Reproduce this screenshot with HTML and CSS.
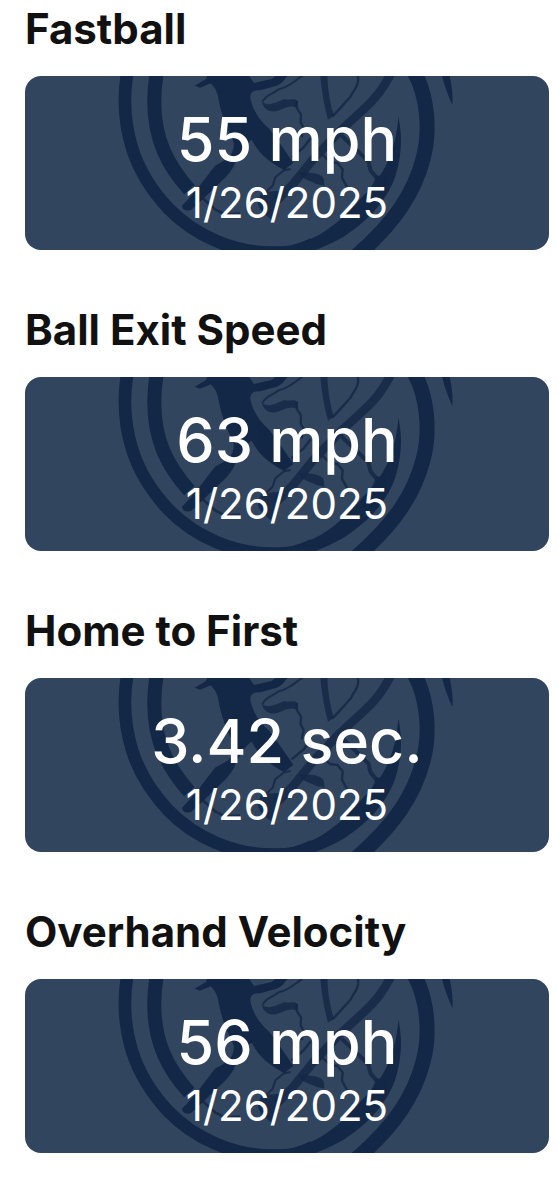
FILE: index.html
```html
<!DOCTYPE html>
<html lang="en">
<head>
<meta charset="utf-8">
<meta name="viewport" content="width=device-width, initial-scale=1">
<title>Player Stats</title>
<link rel="stylesheet" href="styles.css">
</head>
<body>
<svg class="defs" aria-hidden="true">
  <symbol id="emblem" viewBox="-225 21 1572 522" preserveAspectRatio="xMidYMid slice">
    <g fill="none" stroke="currentColor" stroke-linejoin="round">
      <path stroke-width="38" d="M84 0C66 90 74 165 97 240C118 305 160 370 205 418C285 500 400 551 520 551C570 551 600 545 640 525"/>
      <path stroke-width="42" d="M172 0C154 100 164 180 190 243C208 285 232 322 268 362"/>
      <path stroke-width="45" d="M938 0C985 80 991 190 969 270C943 370 885 460 770 560"/>
    </g>
    <g fill="none" stroke="currentColor" stroke-linejoin="round" opacity="0.8">
      <path stroke-width="26" d="M880 0C850 60 825 90 790 122L722 184L640 270L575 350L530 395"/>
      <path stroke-width="6" d="M608 20C585 34 570 53 536 61C520 75 498 77 488 98"/>
      <path stroke-width="7" d="M590 96L591 118L603 136L602 160L611 177L605 205M632 208L610 236L575 265"/>
      <path stroke-width="7" d="M772 15C782 48 760 63 751 84C735 100 720 120 697 142"/>
      <path stroke-width="6" d="M572 300L552 304L526 325L518 350L495 372"/>
      <path stroke-width="7" d="M660 250L690 279L712 282L728 301L726 326L742 356"/>
      <path stroke-width="12" d="M725 200L765 238L805 277L812 305L840 338"/>
      <path stroke-width="8" d="M300 380L345 421L375 436L420 434"/>
    </g>
    <g fill="currentColor">
      <path d="M895 143C909 205 904 265 885 325C860 395 805 455 735 500C700 521 665 537 600 560L590 527C675 500 735 445 785 385C835 335 885 275 895 143Z"/>
      <path d="M1022 0C1030 45 1043 75 1057 108C1060 75 1054 40 1044 0Z"/>
      <path d="M325 10L318 30L284 50L300 56L332 43C344 55 350 65 354 82C360 115 368 150 392 200C408 225 402 245 385 268L345 290C318 325 285 370 246 410C248 424 260 428 274 422C300 400 325 375 345 355C372 330 395 310 405 282C420 250 435 225 455 212C470 240 490 270 552 303L580 282C556 245 530 210 508 180C480 155 462 130 452 92C448 75 455 62 480 64L530 50C545 45 556 30 570 10H540L515 30L462 42L440 10Z"/>
    </g>
    <g fill="currentColor" opacity="0.8">
      <path d="M660 10C664 60 672 110 684 152L702 140C690 105 682 55 682 10Z"/>
      <path d="M485 96C500 114 520 104 554 90C570 96 582 84 593 96L590 116C568 106 550 121 530 126C508 133 488 118 485 96Z"/>
      <path d="M598 310C620 312 645 308 666 322C676 332 670 342 674 350L650 345C635 338 622 335 606 325Z"/>
      <path d="M484 370L540 365C535 400 530 430 520 456C500 440 470 420 474 396Z"/>
      <path d="M828 320L855 318C856 365 830 400 786 425C800 385 815 356 828 320Z"/>
    </g>
  </symbol>
</svg>
<main class="stats">
  <section class="stat">
    <h2 class="stat-title">Fastball</h2>
    <div class="card">
      <svg class="card-emblem" aria-hidden="true"><use href="#emblem"/></svg>
      <p class="card-value">55 mph</p>
      <p class="card-date">1/26/2025</p>
    </div>
  </section>
  <section class="stat">
    <h2 class="stat-title">Ball Exit Speed</h2>
    <div class="card">
      <svg class="card-emblem" aria-hidden="true"><use href="#emblem"/></svg>
      <p class="card-value">63 mph</p>
      <p class="card-date">1/26/2025</p>
    </div>
  </section>
  <section class="stat">
    <h2 class="stat-title">Home to First</h2>
    <div class="card">
      <svg class="card-emblem" aria-hidden="true"><use href="#emblem"/></svg>
      <p class="card-value">3.42 sec.</p>
      <p class="card-date">1/26/2025</p>
    </div>
  </section>
  <section class="stat">
    <h2 class="stat-title">Overhand Velocity</h2>
    <div class="card">
      <svg class="card-emblem" aria-hidden="true"><use href="#emblem"/></svg>
      <p class="card-value">56 mph</p>
      <p class="card-date">1/26/2025</p>
    </div>
  </section>
</main>
</body>
</html>
```
FILE: styles.css
```css
body {
  margin: 0;
  background: #fff;
  color: #111;
  font-family: Inter, "Liberation Sans", sans-serif;
}

.defs {
  position: absolute;
  width: 0;
  height: 0;
}

.stats {
  display: flex;
  flex-direction: column;
  gap: 54px;
  padding: 3px 9px 40px 25px;
}

.stat {
  display: flex;
  flex-direction: column;
  gap: 21px;
}

.stat-title {
  margin: 0;
  font-size: 42px;
  line-height: 52px;
  font-weight: 700;
}

.card {
  position: relative;
  overflow: hidden;
  display: flex;
  flex-direction: column;
  align-items: center;
  padding: 25px 16px 21px;
  border-radius: 16px;
  background: #32455f;
  color: #fff;
}

.card-emblem {
  position: absolute;
  inset: 0;
  width: 100%;
  height: 100%;
  color: #132746;
}

.card-value,
.card-date {
  position: relative;
  margin: 0;
}

.card-value {
  font-size: 61px;
  line-height: 76px;
  font-weight: 500;
}

.card-date {
  font-size: 42px;
  line-height: 52px;
  font-weight: 400;
}
```
